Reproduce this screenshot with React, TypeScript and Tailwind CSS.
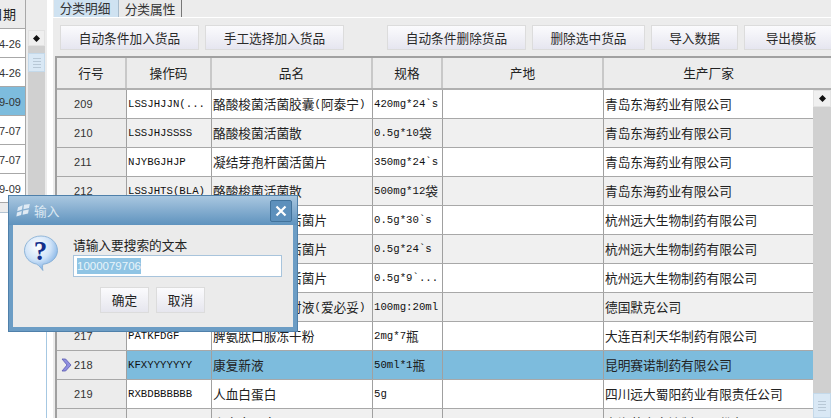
const cjk = "font-['Noto_Sans_CJK_SC','Noto_Sans',sans-serif]"

type Row = { no: string; code: string; name: string; spec: string; maker: string; selected?: boolean }

const rows: Row[] = [
    { no: "209", code: "LSSJHJJN(...", name: "酪酸梭菌活菌胶囊(阿泰宁)", spec: "420mg*24`s", maker: "青岛东海药业有限公司" },
    { no: "210", code: "LSSJHJSSSS", name: "酪酸梭菌活菌散", spec: "0.5g*10袋", maker: "青岛东海药业有限公司" },
    { no: "211", code: "NJYBGJHJP", name: "凝结芽孢杆菌活菌片", spec: "350mg*24`s", maker: "青岛东海药业有限公司" },
    { no: "212", code: "LSSJHTS(BLA)", name: "酪酸梭菌活菌散", spec: "500mg*12袋", maker: "青岛东海药业有限公司" },
    { no: "213", code: "SQGJSLHJP", name: "双歧杆菌三联活菌片", spec: "0.5g*30`s", maker: "杭州远大生物制药有限公司" },
    { no: "214", code: "SQGJSLHJP", name: "双歧杆菌三联活菌片", spec: "0.5g*24`s", maker: "杭州远大生物制药有限公司" },
    { no: "215", code: "SQGJSLHJP", name: "双歧杆菌三联活菌片", spec: "0.5g*9`...", maker: "杭州远大生物制药有限公司" },
    { no: "216", code: "XTXDKZSY", name: "西妥昔单抗注射液(爱必妥)", spec: "100mg:20ml", maker: "德国默克公司" },
    { no: "217", code: "PATKFDGF", name: "脾氨肽口服冻干粉", spec: "2mg*7瓶", maker: "大连百利天华制药有限公司" },
    { no: "218", code: "KFXYYYYYYY", name: "康复新液", spec: "50ml*1瓶", maker: "昆明赛诺制药有限公司", selected: true },
    { no: "219", code: "RXBDBBBBBB", name: "人血白蛋白", spec: "5g", maker: "四川远大蜀阳药业有限责任公司" },
    { no: "220", code: "RXBDBBBBBB", name: "人血白蛋白", spec: "10g", maker: "上海莱士血液制品股份有限公司" },
]

const leftRows = [
    { text: "2018-04-26" },
    { text: "2018-04-26" },
    { text: "2019-09-09", selected: true },
    { text: "2017-07-07" },
    { text: "2017-07-07" },
    { text: "2017-09-09" },
]

// latin goes in the narrow mono, chinese in the cjk font
function Mixed({ text }: { text: string }) {
    return (
        <>
            {text.split(/([\u4e00-\u9fff]+)/).map((part, i) =>
                i % 2 === 1 ? (
                    <span key={i} className={`${cjk} text-[12.7px]`}>{part}</span>
                ) : (
                    <span key={i} className="font-['Liberation_Mono',monospace] text-[10.7px] text-[#111]">{part}</span>
                )
            )}
        </>
    )
}

function ToolButton({ label, className }: { label: string; className: string }) {
    return (
        <div className={`flex items-center justify-center shrink-0 h-[25px] border border-[#dcdcdc] bg-gradient-to-b from-[#fbfbfd] to-[#e6e6f0] text-[12.7px] text-[#2a2a2a] ${cjk} ${className}`}>
            {label}
        </div>
    )
}

function Diamond() {
    return (
        <svg width="7" height="7" viewBox="0 0 7 7">
            <path d="M3.5 0 7 3.5 3.5 7 0 3.5Z" fill="#111" />
        </svg>
    )
}

function ScrollThumb({ className }: { className: string }) {
    return (
        <div className={`flex flex-col items-center justify-center gap-[2px] w-full bg-[#d9e8f5] border border-[#c4d9ea] ${className}`}>
            <div className="w-[8px] h-[1px] bg-[#b8c8d6]" />
            <div className="w-[8px] h-[1px] bg-[#b8c8d6]" />
            <div className="w-[8px] h-[1px] bg-[#b8c8d6]" />
            <div className="w-[8px] h-[1px] bg-[#b8c8d6]" />
        </div>
    )
}

function LeftPane() {
    return (
        <div className="flex flex-col w-[47px] shrink-0 h-full">
            <div className="flex h-[213px] shrink-0 bg-[#ececec] border-b border-[#b4c4d2]">
                <div className="flex flex-col w-[26px] shrink-0 border-r border-[#a8a8a8] overflow-hidden">
                    <div className={`flex items-center justify-end h-[29px] shrink-0 border-b border-[#a8a8a8] bg-[#ececec] text-[13px] text-[#222] whitespace-nowrap pr-[9px] ${cjk}`}>
                        日期
                    </div>
                    {leftRows.map((r, i) => (
                        <div
                            key={i}
                            className={`flex items-center justify-end h-[29px] shrink-0 border-b border-[#a8a8a8] pr-[4px] pt-[2px] text-[11px] text-[#333] whitespace-nowrap font-['Liberation_Sans',sans-serif] ${r.selected ? "bg-[#7dbcdd]" : "bg-white"}`}
                        >
                            {r.text}
                        </div>
                    ))}
                </div>
                <div className="flex flex-col w-[17px] ml-[2px] shrink-0 pt-[30px]">
                    <div className="flex items-center justify-center h-[16px] shrink-0 bg-[#efefef] border border-[#e2e2e2]">
                        <Diamond />
                    </div>
                    <div className="flex-1 bg-[#d0d0d0] pt-[7px]">
                        <ScrollThumb className="h-[19px]" />
                    </div>
                </div>
            </div>
            <div className="flex-1 bg-white border-r border-[#a6c8e2]" />
        </div>
    )
}

function TableRow({ row, index }: { row: Row; index: number }) {
    const bg = row.selected ? "bg-[#7dbcdd]" : index % 2 === 0 ? "bg-white" : "bg-[#f0f0f0]"
    const cell = "flex items-center overflow-hidden whitespace-nowrap pl-[1px] text-[#222]"
    return (
        <div className={`grid grid-cols-[70px_85px_161px_70px_161px_209px] h-[29px] shrink-0 border-b border-[#a8a8a8] ${bg}`}>
            <div className="flex items-center border-r border-[#a0a0a0] bg-[#ececec] pl-[4px]">
                <div className="flex items-center w-[13px] shrink-0">
                    {row.selected && (
                        <svg width="11" height="14" viewBox="0 0 11 14">
                            <path d="M1 1h3.6L10 7l-5.4 6H1l5-6Z" fill="#8f8fe0" stroke="#5a5ab0" strokeWidth="0.8" />
                        </svg>
                    )}
                </div>
                <span className="text-[11px] tracking-[0.1px] text-[#333] font-['Liberation_Sans',sans-serif]">{row.no}</span>
            </div>
            <div className={`${cell} border-r border-[#a0a0a0]`}><Mixed text={row.code} /></div>
            <div className={`${cell} border-r border-[#a0a0a0]`}><Mixed text={row.name} /></div>
            <div className={`${cell} border-r border-[#a0a0a0]`}><Mixed text={row.spec} /></div>
            <div className={`${cell} border-r border-[#a0a0a0]`} />
            <div className={cell}><Mixed text={row.maker} /></div>
        </div>
    )
}

function RightPane() {
    const head = `flex items-center justify-center text-[12.7px] text-[#222] ${cjk}`
    return (
        <div className="flex flex-col flex-1 min-w-0 h-full ml-[6px] bg-[#ececec]">
            <div className={`flex h-[17px] shrink-0 text-[12.7px] text-[#333] ${cjk}`}>
                <div className="flex items-center justify-center w-[65px] ml-[1px] pb-[2px] pr-[2px] bg-[#cfe2f1] border-r border-[#a8bccc]">分类明细</div>
                <div className="flex items-center justify-center w-[63px] bg-[#eaeaea] border-r border-[#777]">分类属性</div>
            </div>
            <div className="flex h-[39px] shrink-0 gap-[6px] pt-[7px] pl-[7px] border-t border-white overflow-hidden">
                <ToolButton label="自动条件加入货品" className="w-[139px]" />
                <ToolButton label="手工选择加入货品" className="w-[139px]" />
                <ToolButton label="自动条件删除货品" className="w-[139px] ml-[37px]" />
                <ToolButton label="删除选中货品" className="w-[113px]" />
                <ToolButton label="导入数据" className="w-[87px]" />
                <ToolButton label="导出模板" className="w-[94px]" />
            </div>
            <div className="flex flex-col flex-1 min-h-0 ml-[2px] border-t-2 border-l-2 border-[#a0a0a0]">
                <div className="grid grid-cols-[70px_85px_161px_70px_161px_209px] h-[32px] shrink-0 border-b-2 border-[#b0b0b0] bg-[#ececec]">
                    <div className={`${head} border-r-2 border-[#c8c8c8]`}>行号</div>
                    <div className={`${head} border-r-2 border-[#c8c8c8]`}>操作码</div>
                    <div className={`${head} border-r-2 border-[#c8c8c8]`}>品名</div>
                    <div className={`${head} border-r-2 border-[#c8c8c8]`}>规格</div>
                    <div className={`${head} border-r-2 border-[#c8c8c8]`}>产地</div>
                    <div className={head}>生产厂家</div>
                </div>
                <div className="flex flex-1 min-h-0">
                    <div className="flex flex-col w-[756px] shrink-0">
                        {rows.map((r, i) => (
                            <TableRow key={r.no} row={r} index={i} />
                        ))}
                    </div>
                    <div className="flex flex-col flex-1">
                        <div className="flex items-center justify-center h-[17px] shrink-0 bg-[#f0f0f0] border border-[#e2e2e2]">
                            <Diamond />
                        </div>
                        <div className="flex-1 bg-[#d0d0d0] pt-[286px]">
                            <ScrollThumb className="h-[25px]" />
                        </div>
                    </div>
                </div>
            </div>
        </div>
    )
}

function InputDialog() {
    return (
        <div className={`absolute left-[8px] top-[195px] flex flex-col w-[290px] h-[137px] border border-[#4f80aa] bg-[#6c9dc5] ${cjk}`}>
            <div className="flex items-center h-[29px] shrink-0 bg-gradient-to-b from-[#a9c7e0] to-[#5f93be] pl-[7px] pr-[5px]">
                <svg width="15" height="14" viewBox="0 0 15 14">
                    <path d="M2 3.2 6.6 1.2 6 5.6 1.2 7.2Z" fill="#dfeaf4" />
                    <path d="M8 .8 13.8 0 13 4 7.4 5.2Z" fill="#dfeaf4" />
                    <path d="M1 8.4 5.8 6.9 5.200 11 .4 12.6Z" fill="#dfeaf4" />
                    <path d="M7.2 6.600 12.8 5.400 12 9.600 6.600 10.800Z" fill="#dfeaf4" />
                </svg>
                <span className="ml-[3px] text-[12.7px] text-[#dce9f3]">输入</span>
                <div className="flex items-center justify-center w-[22px] h-[22px] ml-auto bg-[#5d90bc] border border-[#41729b] rounded-[2px]">
                    <svg width="12" height="12" viewBox="0 0 12 12">
                        <path d="M1.5 1.5 10.5 10.5M10.5 1.5 1.5 10.5" stroke="#fff" strokeWidth="2.2" />
                    </svg>
                </div>
            </div>
            <div className="flex flex-1 mx-[4px] mb-[4px] bg-[#ebebeb] pl-[10px] pt-[11px]">
                <svg width="36" height="36" viewBox="0 0 36 36" className="shrink-0 mt-[-1px]">
                    <defs>
                        <radialGradient id="bubble" cx="0.4" cy="0.3" r="0.8">
                            <stop offset="0" stopColor="#ffffff" />
                            <stop offset="0.5" stopColor="#cfe3f8" />
                            <stop offset="1" stopColor="#5f9bdc" />
                        </radialGradient>
                    </defs>
                    <path d="M18 1C8.600 1 1.500 7.600 1.500 15.500c0 7 5.200 12.400 12 13.600 2.600 1.400 4.400 4 6.400 6.400-.4-2.200-.6-4.200 0-6.200 8-.8 14.600-6.400 14.600-13.800C34.500 7.600 27.400 1 18 1Z" fill="url(#bubble)" stroke="#7ea9d2" strokeWidth="0.8" />
                    <text x="17.500" y="25" textAnchor="middle" fontSize="27" fontWeight="700" fill="#14308c" fontFamily="Liberation Serif, serif">?</text>
                </svg>
                <div className="flex flex-col ml-[14px] w-[209px]">
                    <div className="text-[12.7px] leading-[14px] text-[#222] mt-[2px]">请输入要搜索的文本</div>
                    <div className="flex items-center h-[22px] mt-[3px] pl-[3px] bg-white border border-[#a8c4dc]">
                        <span className="bg-[#8fc4e4] text-[#e8f4fa] text-[11.5px] leading-[16px] font-['Liberation_Sans',sans-serif]">1000079706</span>
                    </div>
                    <div className="flex gap-[7px] mt-[10px] ml-[27px]">
                        <div className="flex items-center justify-center w-[49px] h-[26px] border border-[#dcdcdc] bg-gradient-to-b from-[#fbfbfd] to-[#e6e6ee] text-[12.7px] text-[#222]">确定</div>
                        <div className="flex items-center justify-center w-[49px] h-[26px] border border-[#dcdcdc] bg-gradient-to-b from-[#fbfbfd] to-[#e6e6ee] text-[12.7px] text-[#222]">取消</div>
                    </div>
                </div>
            </div>
        </div>
    )
}

export default function App() {
    return (
        <div className="relative flex w-[831px] h-[418px] overflow-hidden bg-white">
            <LeftPane />
            <RightPane />
            <InputDialog />
        </div>
    )
}
